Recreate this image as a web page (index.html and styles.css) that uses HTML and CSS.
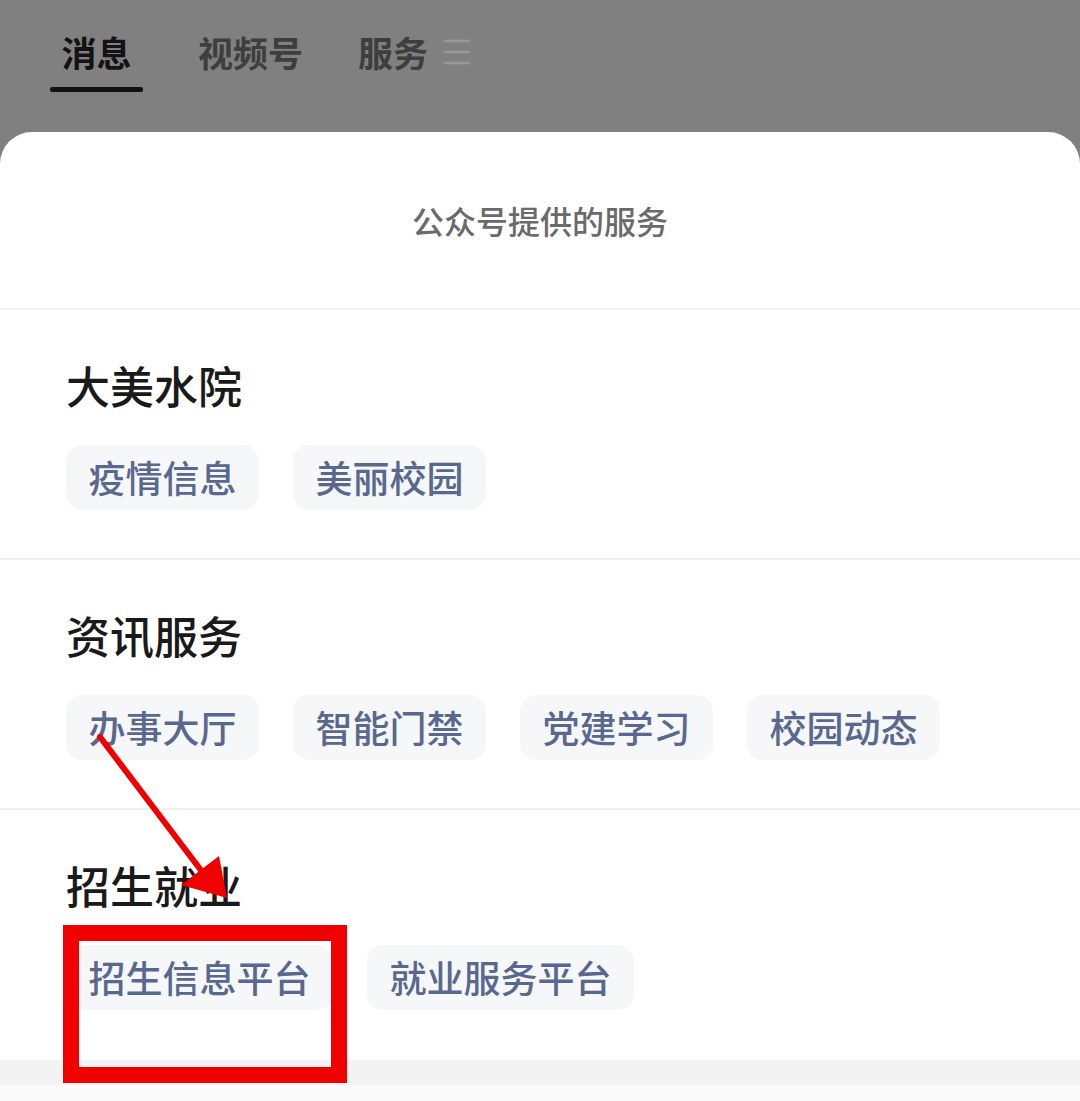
FILE: index.html
```html
<!DOCTYPE html>
<html lang="zh-CN">
<head>
<meta charset="utf-8">
<title>公众号提供的服务</title>
<link rel="stylesheet" href="styles.css">
</head>
<body>
<div class="page">
  <header class="topbar">
    <nav class="tabs">
      <div class="tab tab-active"><span class="tab-label">消息</span><span class="tab-bar"></span></div>
      <div class="tab"><span class="tab-label">视频号</span></div>
      <div class="tab"><span class="tab-label">服务</span>
        <svg class="menu-icon" width="28" height="28" viewBox="0 0 28 28"><path d="M1 3h26M1 14h26M1 25h26" stroke="#989898" stroke-width="2.5" fill="none"/></svg>
      </div>
    </nav>
  </header>
  <main class="sheet">
    <div class="sheet-title">公众号提供的服务</div>
    <section class="group">
      <h2 class="group-title">大美水院</h2>
      <div class="chips">
        <span class="chip">疫情信息</span>
        <span class="chip">美丽校园</span>
      </div>
    </section>
    <section class="group">
      <h2 class="group-title">资讯服务</h2>
      <div class="chips">
        <span class="chip">办事大厅</span>
        <span class="chip">智能门禁</span>
        <span class="chip">党建学习</span>
        <span class="chip">校园动态</span>
      </div>
    </section>
    <section class="group group-last">
      <h2 class="group-title">招生就业</h2>
      <div class="chips">
        <span class="chip">招生信息平台</span>
        <span class="chip">就业服务平台</span>
      </div>
    </section>
    <div class="sheet-footer"></div>
  </main>
  <svg class="annotation" width="1080" height="1101" viewBox="0 0 1080 1101">
    <line x1="100" y1="737" x2="203" y2="873" stroke="#f00000" stroke-width="6" stroke-linecap="round"/>
    <polygon points="181,885 219,856 227,898" fill="#f00000"/>
    <rect x="71" y="933" width="268" height="142" fill="none" stroke="#f00000" stroke-width="16"/>
  </svg>
</div>
</body>
</html>
```

FILE: styles.css
```css
* { box-sizing: border-box; }
html, body {
  margin: 0;
  padding: 0;
  background: #808080;
}
body {
  font-family: "Noto Sans CJK SC", "Noto Sans", sans-serif;
  width: 1080px;
  height: 1101px;
  overflow: hidden;
}
.page {
  position: relative;
  width: 1080px;
  height: 1101px;
}
.topbar {
  height: 132px;
  background: #808080;
  padding: 27px 0 0 50px;
}
.tabs {
  display: flex;
  align-items: flex-start;
  gap: 55px;
}
.tab {
  display: flex;
  flex-direction: column;
  align-items: center;
}
.tab:last-child {
  flex-direction: row;
  align-items: center;
  gap: 15px;
}
.tab-label {
  font-size: 35px;
  line-height: 50px;
  font-weight: 700;
  color: #3e3e3e;
}
.tab-active .tab-label {
  color: #121212;
}
.tab-bar {
  width: 93px;
  height: 5px;
  margin-top: 10px;
  background: #111;
  border-radius: 2px;
}
.menu-icon {
  display: block;
}
.sheet {
  background: #fff;
  border-radius: 32px 32px 0 0;
  height: 969px;
  overflow: hidden;
}
.sheet-title {
  height: 178px;
  display: flex;
  align-items: center;
  justify-content: center;
  font-size: 32px;
  font-weight: 500;
  color: #6a6a6a;
  border-bottom: 2px solid #f1f1f1;
}
.group {
  padding: 45px 66px 48px;
  border-bottom: 2px solid #f1f1f1;
}
.group-last {
  border-bottom: none;
  padding-bottom: 50px;
}
.group-title {
  margin: 0 0 30px;
  font-size: 44px;
  line-height: 60px;
  font-weight: 500;
  color: #1a1a1a;
}
.chips {
  display: flex;
  gap: 34px;
}
.chip {
  height: 65px;
  line-height: 65px;
  padding: 0 22.5px;
  border-radius: 16px;
  background: #f6f7f9;
  font-size: 37px;
  font-weight: 500;
  color: #59688f;
  white-space: nowrap;
}
.sheet-footer {
  height: 41px;
  background: linear-gradient(#f3f3f3 0, #f3f3f3 25px, #fafafa 25px);
}
.annotation {
  position: absolute;
  left: 0;
  top: 0;
  pointer-events: none;
}
```
